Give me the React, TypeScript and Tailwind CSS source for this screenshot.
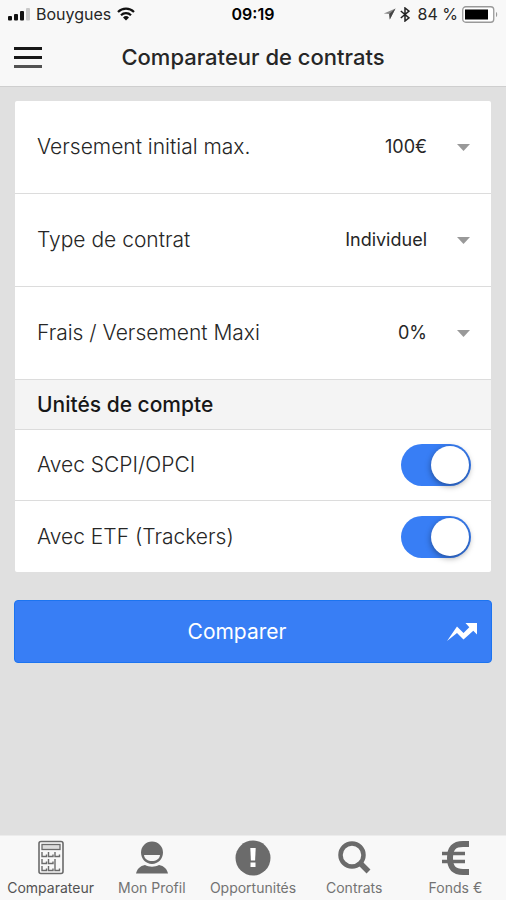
import { useState } from "react";
import type { ReactNode } from "react";

const SignalIcon = () => (
  <svg width="22" height="14" viewBox="0 0 22 14" aria-hidden="true">
    <rect x="0" y="9" width="4" height="4.500" rx="1" fill="#111" />
    <rect x="6" y="7" width="4" height="6.500" rx="1" fill="#111" />
    <rect x="12" y="4" width="4" height="9.500" rx="1" fill="#111" />
    <rect x="18" y="1" width="4" height="12.500" rx="1" fill="#c8c8c8" />
  </svg>
);

const WifiIcon = () => (
  <svg width="18" height="14" viewBox="0 0 18 14" fill="none" stroke="#111" aria-hidden="true">
    <path d="M1 5a11.3 11.3 0 0 1 16 0" strokeWidth="2.2" />
    <path d="M4 8.2a7 7 0 0 1 10 0" strokeWidth="2.2" />
    <path d="M9 13.4 6 10.4a4.3 4.3 0 0 1 6 0z" fill="#111" stroke="none" />
  </svg>
);

const LocationIcon = () => (
  <svg width="13" height="12" viewBox="0 0 13 12" aria-hidden="true">
    <path d="M12.5.5.8 5.6l5.4.5.6 5.4z" fill="#8a8a8a" />
    <path d="M12.5.5 6.2 6.1l.6 5.4z" fill="#444" />
  </svg>
);

const BluetoothIcon = () => (
  <svg width="10" height="15" viewBox="0 0 10 15" fill="none" stroke="#222" strokeWidth="1.5" aria-hidden="true">
    <path d="M.8 4 9 10.8 5 14V1l4 3.2L.8 11" />
  </svg>
);

const BatteryIcon = () => (
  <svg width="36" height="17" viewBox="0 0 36 17" aria-hidden="true">
    <rect x=".75" y=".75" width="31" height="15.5" rx="3" fill="#fff" stroke="#999" strokeWidth="1.3" />
    <rect x="3" y="3.5" width="23" height="10" fill="#000" />
    <path d="M34 6v5c1.6-.6 1.6-4.400 0-5z" fill="#999" />
  </svg>
);

const CalculatorIcon = () => (
  <svg width="26" height="36" viewBox="0 0 26 36" fill="none" stroke="#6b6b6b" aria-hidden="true">
    <rect x="1" y="1.500" width="24" height="32" rx="2" strokeWidth="1.6" />
    <rect x="4" y="4.500" width="18" height="5" fill="#ddd" strokeWidth="1.3" />
    <path
      d="M4 12v4.500h4.500v-2M10.500 12v4.500H15v-2M17 12v4.500h4.500v-2M4 19v4.500h4.500v-2M10.500 19v4.500H15v-2M4 26v4.500h4.500v-2M10.500 26v4.500H15v-2M17 19v11.500h4.500v-2"
      strokeWidth="1.4"
    />
  </svg>
);

const ProfileIcon = () => (
  <svg width="32" height="36" viewBox="0 0 32 36" fill="#6b6b6b" aria-hidden="true">
    <path
      fillRule="evenodd"
      d="M16 1.500a11 11 0 0 1 11 11c0 6.500-5 11.500-11 11.500S5 19 5 12.500a11 11 0 0 1 11-11zM8 15c.5 4 4 6 8 6s7.500-2 8-6z"
    />
    <path d="M0 33.500c1-4.500 4-7.500 9-8.500 4 2.200 10 2.200 14 0 5 1 8 4 9 8.500z" />
  </svg>
);

const AlertIcon = () => (
  <svg width="36" height="36" viewBox="0 0 36 36" aria-hidden="true">
    <circle cx="18" cy="18" r="17.500" fill="#6b6b6b" />
    <path d="M15.300 8h5.400l-.6 12.500h-4.200z" fill="#fff" />
    <rect x="15.500" y="22.500" width="5" height="4.500" fill="#fff" />
  </svg>
);

const SearchIcon = () => (
  <svg width="34" height="36" viewBox="0 0 34 36" fill="none" stroke="#6b6b6b" aria-hidden="true">
    <circle cx="15" cy="15" r="11.500" strokeWidth="4.500" />
    <path d="m23 23 8.500 8.500" strokeWidth="5.500" />
  </svg>
);

const EuroIcon = () => (
  <svg width="28" height="36" viewBox="0 0 28 36" fill="none" stroke="#6b6b6b" aria-hidden="true">
    <path d="M28 4h-6C12.500 4 9 8.500 9 18s3.500 14 13 14h6" strokeWidth="6" />
    <path d="M1 13.500h23M1 21.500h23" strokeWidth="3.500" />
  </svg>
);

const TrendIcon = () => (
  <svg width="30" height="20" viewBox="0 0 30 20" fill="#fff" aria-hidden="true">
    <path d="M0 19 10 4.500l6.500 6.500 5.800-5.800L18.500 1H30v11.500l-3.700-3.700L16.500 17.500 10 11z" />
  </svg>
);

const StatusBar = () => (
  <div className="grid grid-cols-[1fr_auto_1fr] items-center h-7 px-2 text-base text-neutral-800">
    <div className="flex items-center gap-1.5">
      <SignalIcon />
      <span>Bouygues</span>
      <WifiIcon />
    </div>
    <span className="font-semibold text-black">09:19</span>
    <div className="flex items-center justify-end gap-1">
      <LocationIcon />
      <BluetoothIcon />
      <span className="ml-1">84 %</span>
      <BatteryIcon />
    </div>
  </div>
);

const Header = () => (
  <header className="bg-[#f8f8f8] border-b border-[#cfcfcf]">
    <StatusBar />
    <div className="grid grid-cols-[1fr_auto_1fr] items-center h-[58px] px-3.5">
      <button type="button" aria-label="Menu" className="flex flex-col gap-1.5 w-7">
        <span className="h-[3px] bg-neutral-900" />
        <span className="h-[3px] bg-neutral-900" />
        <span className="h-[3px] bg-neutral-600" />
      </button>
      <h1 className="text-[22px] font-medium text-neutral-800">Comparateur de contrats</h1>
    </div>
  </header>
);

type SelectRowProps = { id: string; label: string; options: string[] };

const SelectRow = ({ id, label, options }: SelectRowProps) => (
  <div className="flex items-center justify-between h-[93px] pl-[22px] pr-[21px] border-b border-[#dcdcdc]">
    <label htmlFor={id}>{label}</label>
    <div className="flex items-center gap-[30px]">
      <select
        id={id}
        className="appearance-none field-sizing-content bg-transparent text-lg font-normal"
      >
        {options.map((option) => (
          <option key={option}>{option}</option>
        ))}
      </select>
      <svg width="13" height="7" viewBox="0 0 13 7" fill="#999" aria-hidden="true">
        <path d="M0 0h13L6.500 7z" />
      </svg>
    </div>
  </div>
);

const ToggleRow = ({ id, label }: { id: string; label: string }) => {
  const [checked, setChecked] = useState(true);

  return (
    <div className="flex items-center justify-between h-[71px] pl-[22px] pr-5">
      <label htmlFor={id}>{label}</label>
      <input
        id={id}
        type="checkbox"
        role="switch"
        checked={checked}
        onChange={() => setChecked(!checked)}
        className="appearance-none flex items-center w-[70px] h-[42px] p-0.5 rounded-full bg-neutral-300 checked:bg-[#387ef5] checked:justify-end before:size-[38px] before:rounded-full before:bg-white before:shadow-[0_2px_6px_rgba(0,0,0,0.4)]"
      />
    </div>
  );
};

type TabProps = { label: string; icon: ReactNode; active?: boolean };

const Tab = ({ label, icon, active }: TabProps) => (
  <a
    href="#"
    className={`flex flex-1 flex-col items-center gap-0.5 whitespace-nowrap text-sm ${
      active ? "text-neutral-600" : "text-neutral-500"
    }`}
  >
    {icon}
    {label}
  </a>
);

const App = () => (
  <div className="flex flex-col min-h-screen bg-[#e0e0e0] font-['Inter','Liberation_Sans',sans-serif]">
    <Header />

    <main className="flex-1 px-3.5 pt-3.5">
      <section className="mx-px rounded-xs bg-white text-[21px] font-light text-neutral-800">
        <SelectRow id="versement" label="Versement initial max." options={["100€", "500€", "1000€"]} />
        <SelectRow id="type" label="Type de contrat" options={["Individuel", "Collectif"]} />
        <SelectRow id="frais" label="Frais / Versement Maxi" options={["0%", "1%", "2%"]} />
        <h2 className="flex items-center h-[50px] px-[22px] bg-[#f4f4f4] border-b border-[#dcdcdc] font-medium text-neutral-900">
          Unités de compte
        </h2>
        <div className="divide-y divide-[#dcdcdc]">
          <ToggleRow id="scpi" label="Avec SCPI/OPCI" />
          <ToggleRow id="etf" label="Avec ETF (Trackers)" />
        </div>
      </section>

      <button
        type="button"
        className="flex items-center w-full h-[63px] mt-7 pr-3.5 rounded-sm border border-[#1c74f0] bg-[#387ef5] text-[21px] text-white"
      >
        <span className="flex-1 pl-3">Comparer</span>
        <TrendIcon />
      </button>
    </main>

    <nav className="flex h-[65px] pt-1 bg-[#f8f8f8] border-t border-[#ececec]">
      <Tab label="Comparateur" icon={<CalculatorIcon />} active />
      <Tab label="Mon Profil" icon={<ProfileIcon />} />
      <Tab label="Opportunités" icon={<AlertIcon />} />
      <Tab label="Contrats" icon={<SearchIcon />} />
      <Tab label="Fonds €" icon={<EuroIcon />} />
    </nav>
  </div>
);

export default App;
